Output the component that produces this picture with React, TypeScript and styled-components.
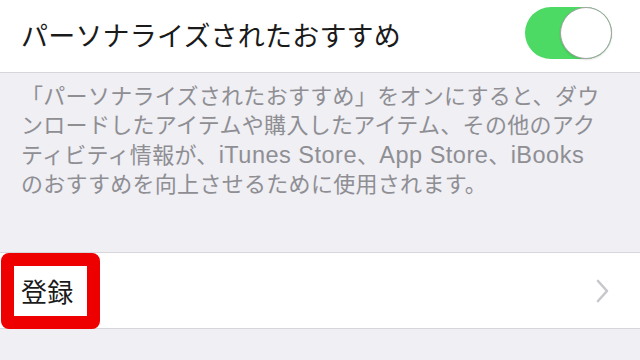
import React from 'react';
import styled, { createGlobalStyle } from 'styled-components';

const GlobalStyle = createGlobalStyle`
  html, body {
    margin: 0;
    padding: 0;
    background: #efeff4;
  }
  body {
    font-family: "Noto Sans CJK JP", "Noto Sans", sans-serif;
  }
`;

const Page = styled.div`
  width: 640px;
  height: 360px;
  overflow: hidden;
  background: #efeff4;
  display: flex;
  flex-direction: column;
`;

const Row = styled.div<{ $height: number; $topBorder?: boolean }>`
  position: relative;
  height: ${(p) => p.$height}px;
  box-sizing: border-box;
  background: #fff;
  display: flex;
  align-items: center;
  justify-content: space-between;
  padding: 0 28px 0 21px;
  border-bottom: 1px solid #d6d6db;
  border-top: ${(p) => (p.$topBorder ? '1px solid #d6d6db' : 'none')};
`;

const Label = styled.span<{ $size: number; $lift?: number }>`
  font-size: ${(p) => p.$size}px;
  color: #1a1a1a;
  letter-spacing: 0.2px;
  white-space: nowrap;
  margin-top: ${(p) => -(p.$lift ?? 0)}px;
`;

const Toggle = styled.div<{ $on: boolean }>`
  width: 87px;
  height: 52px;
  border-radius: 26px;
  background: ${(p) => (p.$on ? '#4cd964' : '#e5e5ea')};
  position: relative;
  margin-top: -6px;
`;

const Knob = styled.div`
  position: absolute;
  top: 0;
  right: 0;
  width: 52px;
  height: 52px;
  box-sizing: border-box;
  border-radius: 50%;
  background: #fff;
  border: 1.5px solid #a3a3a3;
  box-shadow: 0 1px 2px rgba(0, 0, 0, 0.12);
`;

const Footer = styled.div`
  padding: 9px 0 0 21px;
  height: 179px;
  box-sizing: border-box;
  color: #8e8e93;
  font-family: "Liberation Sans", "Noto Sans CJK JP", sans-serif;
  font-size: 22px;
  letter-spacing: 0.3px;
  line-height: 29.3px;
`;

const Line = styled.div`
  white-space: nowrap;
`;

const Latin = styled.span`
  font-size: 23.5px;
  letter-spacing: 0.5px;
`;

const Marker = styled.div`
  position: absolute;
  left: 1px;
  top: 0;
  width: 99px;
  height: 76px;
  box-sizing: border-box;
  border: 13px solid #ee0000;
  border-radius: 8px;
`;

const Chevron = styled.svg`
  width: 14px;
  height: 24px;
  margin-right: 2px;
`;

const App: React.FC = () => {
  return (
    <>
      <GlobalStyle />
      <Page>
        <Row $height={73}>
          <Label $size={27} $lift={3}>パーソナライズされたおすすめ</Label>
          <Toggle $on>
            <Knob />
          </Toggle>
        </Row>
        <Footer>
          <Line>「パーソナライズされたおすすめ」をオンにすると、ダウ</Line>
          <Line>ンロードしたアイテムや購入したアイテム、その他のアク</Line>
          <Line>
            ティビティ情報が、<Latin>iTunes Store</Latin>、<Latin>App Store</Latin>、<Latin>iBooks</Latin>
          </Line>
          <Line>のおすすめを向上させるために使用されます。</Line>
        </Footer>
        <Row $height={77} $topBorder>
          <Label $size={26}>登録</Label>
          <Marker />
          <Chevron viewBox="0 0 14 24">
            <path d="M2 2 L11 12 L2 22" fill="none" stroke="#c7c7cc" strokeWidth="2.6" strokeLinecap="round" strokeLinejoin="round" />
          </Chevron>
        </Row>
      </Page>
    </>
  );
};

export default App;
